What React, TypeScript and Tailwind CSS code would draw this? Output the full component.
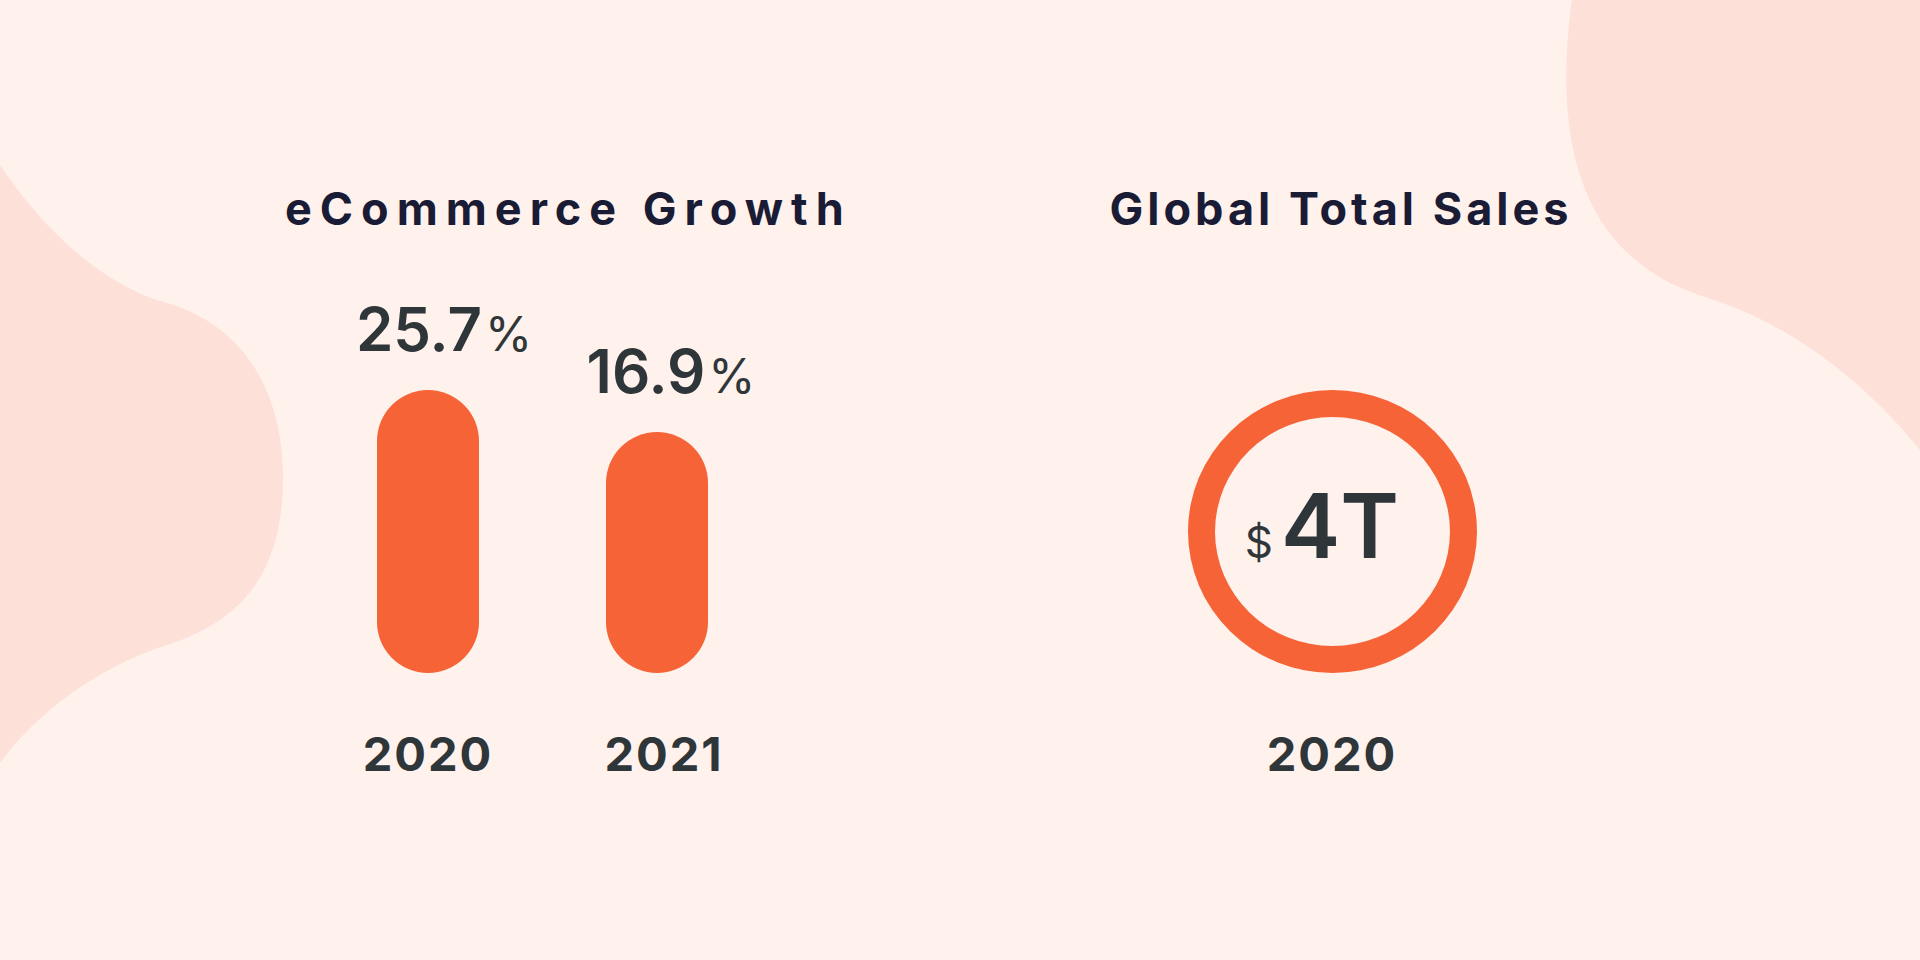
const ink = 'text-[#2f3639]'

function Backdrop() {
  // soft blobs sitting behind the charts
  return (
    <svg className="absolute inset-0 h-full w-full" viewBox="0 0 1920 960" preserveAspectRatio="none">
      <path
        d="M-10,150 L0,165 C40,225 100,285 167,303 C250,327 283,400 283,477 C283,570 245,620 167,645 C95,668 35,715 0,763 L-10,775 Z"
        fill="#fde1d9"
      />
      <path
        d="M1572,-1 C1558,100 1566,205 1638,262 C1665,284 1690,292 1720,302 C1795,328 1868,385 1920,450 L1920,-1 Z"
        fill="#fde1d9"
      />
    </svg>
  )
}

interface BarProps {
  value: string
  year: string
  height: string
  shift: string
  yearShift?: string
}

function Bar({ value, year, height, shift, yearShift = '' }: BarProps) {
  return (
    <div className="flex w-[102px] flex-col items-center">
      <div className={`flex items-baseline whitespace-nowrap leading-none ${shift} ${ink}`}>
        <span className="text-[60px] font-semibold">{value}</span>
        <span className="ml-[3px] text-[48px] font-normal">%</span>
      </div>
      <div className={`mt-[31px] w-[102px] rounded-full bg-[#f66336] ${height}`} />
      <div className={`mt-[57px] whitespace-nowrap text-[47px] font-bold leading-none tracking-[2px] ${yearShift} ${ink}`}>
        {year}
      </div>
    </div>
  )
}

export default function App() {
  return (
    <div
      className="relative h-[960px] w-[1920px] overflow-hidden bg-[#fff1ec]"
      style={{ fontFamily: 'Inter, "Noto Sans", sans-serif' }}
    >
      <Backdrop />

      <div className="relative flex pl-[285px] pt-[186px]">
        {/* eCommerce growth */}
        <div className="flex w-[558px] flex-col">
          <h2 className="whitespace-nowrap text-[45px] font-bold leading-none tracking-[8px] text-[#1a1c35]">
            eCommerce Growth
          </h2>
          <div className="mt-[68px] flex items-end gap-[127px] pl-[92px]">
            <Bar value="25.7" year="2020" height="h-[283px]" shift="ml-[32px]" />
            <Bar value="16.9" year="2021" height="h-[241px]" shift="ml-[28px]" yearShift="ml-[14px]" />
          </div>
        </div>

        {/* Global total sales */}
        <div className="ml-[189px] flex w-[600px] flex-col items-center">
          <h2 className="ml-[18px] whitespace-nowrap text-[45px] font-bold leading-none tracking-[4px] text-[#1a1c35]">
            Global Total Sales
          </h2>
          <div className="mt-[159px] flex h-[283px] w-[289px] items-center justify-center rounded-[50%] border-[27px] border-[#f66336]">
            <div className={`flex items-baseline pb-[13px] pr-[20px] leading-none ${ink}`}>
              <span className="mr-[8px] text-[44px] font-normal">$</span>
              <span className="text-[89px] font-semibold">4T</span>
            </div>
          </div>
          <div className={`mt-[57px] whitespace-nowrap text-[47px] font-bold leading-none tracking-[2px] ${ink}`}>
            2020
          </div>
        </div>
      </div>
    </div>
  )
}
